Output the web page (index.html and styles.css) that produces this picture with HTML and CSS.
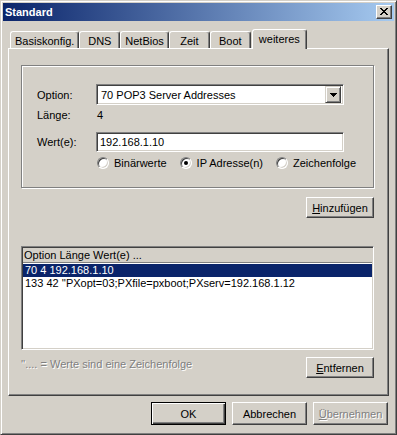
FILE: index.html
```html
<!DOCTYPE html>
<html lang="de">
<head>
  <meta charset="UTF-8" />
  <title>Standard</title>
  <link rel="stylesheet" href="styles.css">
</head>
<body>
  <div class="window">
    <div class="titlebar">
      <span class="title">Standard</span>
      <span class="close-btn">
        <svg width="8" height="7" viewBox="0 0 8 7" shape-rendering="crispEdges">
          <path fill="#000" d="M0 0h2v1H0zM6 0h2v1H6zM1 1h2v1H1zM5 1h2v1H5zM2 2h4v1H2zM3 3h2v1H3zM2 4h4v1H2zM1 5h2v1H1zM5 5h2v1H5zM0 6h2v1H0zM6 6h2v1H6z"/>
        </svg>
      </span>
    </div>

    <div class="content">
      <div class="tabs">
        <div class="tab">Basiskonfig.</div>
        <div class="tab">DNS</div>
        <div class="tab">NetBios</div>
        <div class="tab">Zeit</div>
        <div class="tab">Boot</div>
        <div class="tab active">weiteres</div>
      </div>

      <div class="panel">
        <div class="group">
          <div class="form-grid">
            <span class="label">Option:</span>
            <div class="select">
              <span class="select-text">70 POP3 Server Addresses</span>
              <span class="drop-btn">
                <svg width="7" height="4" viewBox="0 0 7 4" shape-rendering="crispEdges">
                  <path fill="#000" d="M0 0h7v1H0zM1 1h5v1H1zM2 2h3v1H2zM3 3h1v1H3z"/>
                </svg>
              </span>
            </div>
            <span class="label short">Länge:</span>
            <span class="value short">4</span>
            <span class="label">Wert(e):</span>
            <div class="field">192.168.1.10</div>
          </div>
          <div class="radios">
            <span class="radio-item"><span class="radio"></span>Binärwerte</span>
            <span class="radio-item"><span class="radio checked"></span>IP Adresse(n)</span>
            <span class="radio-item"><span class="radio"></span>Zeichenfolge</span>
          </div>
        </div>

        <div class="btn-row">
          <button class="btn small"><u>H</u>inzufügen</button>
        </div>

        <div class="list">
          <div class="list-head">Option Länge Wert(e) ...</div>
          <div class="list-row selected">70 4 192.168.1.10</div>
          <div class="list-row">133 42 ''PXopt=03;PXfile=pxboot;PXserv=192.168.1.12</div>
        </div>

        <div class="hint-row">
          <span class="hint">''.... = Werte sind eine Zeichenfolge</span>
          <button class="btn small"><u>E</u>ntfernen</button>
        </div>
      </div>

      <div class="footer">
        <button class="btn wide default">OK</button>
        <button class="btn wide">Abbrechen</button>
        <button class="btn wide disabled"><u>Ü</u>bernehmen</button>
      </div>
    </div>
  </div>
</body>
</html>
```

FILE: styles.css
```css
html, body {
  margin: 0;
  padding: 0;
  background: #d4d0c8;
}
body {
  font-family: "Liberation Sans", Arial, sans-serif;
  font-size: 11px;
  color: #000;
}
.window {
  width: 397px;
  height: 435px;
  box-sizing: border-box;
  border: 1px solid;
  border-color: #d4d0c8 #404040 #404040 #d4d0c8;
  box-shadow: inset 1px 1px #fff, inset -1px -1px #808080;
  padding: 2px;
  background: #d4d0c8;
  display: flex;
  flex-direction: column;
}
.titlebar {
  height: 18px;
  display: flex;
  align-items: center;
  justify-content: space-between;
  padding: 0 2px 0 2px;
  background: linear-gradient(to right, #0a246a, #a6caf0);
}
.title {
  color: #fff;
  font-weight: 700;
}
.close-btn {
  width: 16px;
  height: 14px;
  box-sizing: border-box;
  border: 1px solid;
  border-color: #fff #404040 #404040 #fff;
  box-shadow: inset -1px -1px #808080;
  background: #d4d0c8;
  display: flex;
  align-items: center;
  justify-content: center;
  padding: 0 1px 1px 0;
}
.close-btn svg {
  display: block;
}
.content {
  padding: 8px 5px 0;
}

/* tabs */
.tabs {
  display: flex;
  align-items: flex-end;
  height: 19px;
  padding-left: 2px;
}
.tab {
  height: 17px;
  min-width: 41px;
  box-sizing: border-box;
  border: 1px solid;
  border-bottom: none;
  border-color: #fff #404040 transparent #fff;
  box-shadow: inset -1px 0 #808080;
  border-radius: 3px 3px 0 0;
  padding: 2px 4px 0;
  display: flex;
  align-items: center;
  justify-content: center;
  white-space: nowrap;
}
.tab.active {
  height: 20px;
  margin: 0 -2px -1px 1px;
  padding: 0 6px 1px;
  position: relative;
  z-index: 1;
  background: #d4d0c8;
}

/* panel */
.panel {
  height: 348px;
  box-sizing: border-box;
  border: 1px solid;
  border-color: #fff #404040 #404040 #fff;
  box-shadow: inset -1px -1px #808080;
  padding: 16px 14px 0 12px;
  display: flex;
  flex-direction: column;
}
.group {
  height: 123px;
  box-sizing: border-box;
  border: 1px solid #808080;
  box-shadow: inset 1px 1px #fff, 1px 1px #fff;
  padding: 18px 0 0 15px;
}
.form-grid {
  display: grid;
  grid-template-columns: 59px 248px;
  grid-template-rows: 21px 27px 20px;
  align-items: center;
}
.short {
  align-self: start;
  padding-top: 4px;
}
.value {
  padding-left: 1px;
}
.select, .field {
  box-sizing: border-box;
  border: 1px solid;
  border-color: #808080 #fff #fff #808080;
  box-shadow: inset 1px 1px #404040, inset -1px -1px #d4d0c8;
  background: #fff;
  height: 21px;
}
.select {
  display: flex;
  align-items: center;
  padding: 2px;
}
.select-text {
  flex: 1;
  padding-left: 2px;
}
.drop-btn {
  width: 16px;
  height: 17px;
  box-sizing: border-box;
  border: 1px solid;
  border-color: #d4d0c8 #404040 #404040 #d4d0c8;
  box-shadow: inset 1px 1px #fff, inset -1px -1px #808080;
  background: #d4d0c8;
  display: flex;
  align-items: center;
  justify-content: center;
}
.drop-btn svg {
  display: block;
}
.field {
  height: 20px;
  display: flex;
  align-items: center;
  padding: 0 3px;
}
.radios {
  display: flex;
  gap: 13px;
  margin: 5px 0 0 60px;
}
.radio-item {
  display: flex;
  align-items: center;
  gap: 5px;
}
.radio {
  width: 12px;
  height: 12px;
  box-sizing: border-box;
  border-radius: 50%;
  border: 1px solid;
  border-color: #808080 #fff #fff #808080;
  box-shadow: inset 1px 1px #404040, inset -1px -1px #d4d0c8;
  background: #fff;
  display: flex;
  align-items: center;
  justify-content: center;
}
.radio.checked::after {
  content: "";
  width: 4px;
  height: 4px;
  border-radius: 50%;
  background: #000;
}

/* buttons */
.btn {
  box-sizing: border-box;
  font: inherit;
  color: #000;
  background: #d4d0c8;
  border: 1px solid;
  border-color: #fff #404040 #404040 #fff;
  box-shadow: inset -1px -1px #808080;
  padding: 0;
  margin: 0;
}
.btn.small {
  width: 68px;
  height: 21px;
}
.btn.wide {
  width: 75px;
  height: 23px;
}
.btn.default {
  border-color: #000;
  box-shadow: inset 1px 1px #fff, inset -1px -1px #404040, inset -2px -2px #808080;
}
.btn.disabled {
  color: #808080;
  text-shadow: 1px 1px #fff;
}
.btn-row {
  display: flex;
  justify-content: flex-end;
  margin-top: 9px;
}

/* list */
.list {
  margin-top: 28px;
  height: 104px;
  box-sizing: border-box;
  border: 1px solid;
  border-color: #808080 #fff #fff #808080;
  box-shadow: inset 1px 1px #404040, inset -1px -1px #d4d0c8;
  background: #fff;
  padding: 1px;
}
.list-head {
  height: 14px;
  line-height: 14px;
  background: #d4d0c8;
  border-bottom: 1px solid #808080;
  padding-left: 1px;
  margin-bottom: 1px;
}
.list-row {
  height: 13px;
  line-height: 13px;
  padding-left: 2px;
  white-space: nowrap;
}
.list-row.selected {
  background: #0a246a;
  color: #fff;
}
.hint-row {
  display: flex;
  justify-content: space-between;
  align-items: flex-start;
  margin-top: 7px;
}
.hint {
  color: #808080;
  text-shadow: 1px 1px #fff;
  margin-top: 1px;
}

/* footer */
.footer {
  display: flex;
  justify-content: flex-end;
  gap: 6px;
  padding: 6px 1px 0 0;
}
```
